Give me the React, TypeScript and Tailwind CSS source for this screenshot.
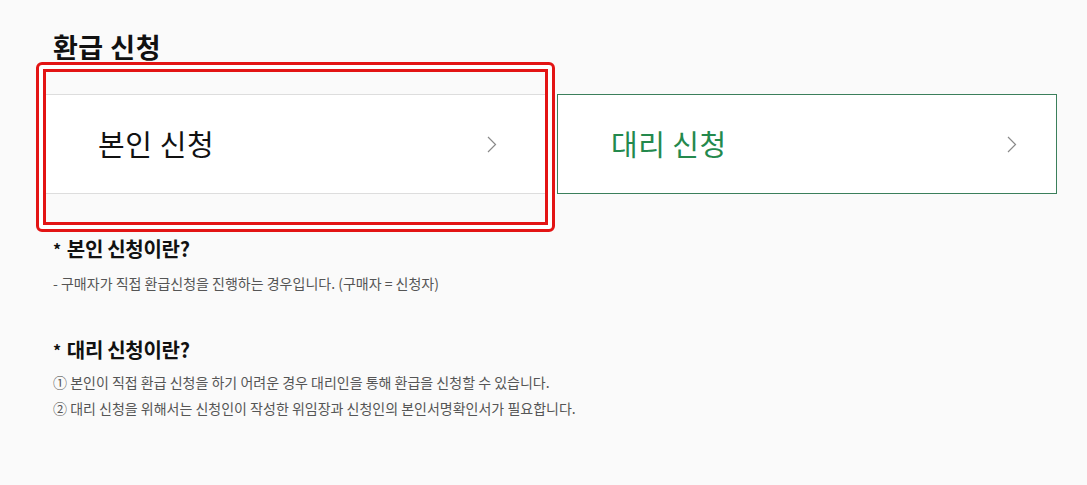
const font = { fontFamily: '"Noto Sans CJK KR", "Noto Sans", sans-serif' };

function Chevron() {
    return (
        <svg width="10" height="17" viewBox="0 0 10 17" fill="none">
            <path d="M1 1l7.5 7.5L1 16" stroke="#8a8a8a" strokeWidth="1.2" />
        </svg>
    );
}

export default function App() {
    return (
        <div className="min-h-screen bg-[#fafafa] text-[#111]" style={font}>
            <div className="pl-[44px] pt-[30px] w-[1057px]">
                <h1 className="ml-[9px] text-[27px] leading-[34px] font-bold tracking-[0.5px]">환급 신청</h1>

                <div className="mt-[30px] flex gap-[10px]">
                    <div className="relative w-[503px]">
                        <button className="w-full h-[100px] bg-white border-y border-[#dddddd] flex items-center justify-between pl-[54px] pr-[50px]">
                            <span className="text-[29px] leading-none tracking-[0.6px] -mt-[2px]">본인 신청</span>
                            <Chevron />
                        </button>
                        {/* highlight box over the selected card */}
                        <div className="absolute -left-[8px] -right-[8px] -top-[32px] -bottom-[38px] border-[3px] border-[#e31414] rounded-[6px] shadow-[inset_0_0_0_4px_#ffffff] p-[4px] pointer-events-none">
                            <div className="w-full h-full border-[3px] border-[#e31414]" />
                        </div>
                    </div>
                    <button className="w-[500px] h-[100px] bg-white border border-[#3b7f5b] flex items-center justify-between pl-[53px] pr-[39px]">
                        <span className="text-[29px] leading-none tracking-[0.5px] -mt-[2px] text-[#24894d]">대리 신청</span>
                        <Chevron />
                    </button>
                </div>

                <div className="ml-[9px] mt-[42px]">
                    <h2 className="text-[20px] leading-[26px] font-bold tracking-[-0.3px]"><span className="text-[16px] align-[1px] mr-[6px]">*</span>본인 신청이란?</h2>
                    <p className="mt-[8px] text-[14px] leading-[26px] text-[#555]">- 구매자가 직접 환급신청을 진행하는 경우입니다. (구매자 = 신청자)</p>

                    <h2 className="mt-[41px] text-[20px] leading-[26px] font-bold tracking-[-0.3px]"><span className="text-[16px] align-[1px] mr-[6px]">*</span>대리 신청이란?</h2>
                    <div className="mt-[6px] text-[14px] leading-[26px] text-[#555]">
                        <p>① 본인이 직접 환급 신청을 하기 어려운 경우 대리인을 통해 환급을 신청할 수 있습니다.</p>
                        <p>② 대리 신청을 위해서는 신청인이 작성한 위임장과 신청인의 본인서명확인서가 필요합니다.</p>
                    </div>
                </div>
            </div>
        </div>
    );
}
